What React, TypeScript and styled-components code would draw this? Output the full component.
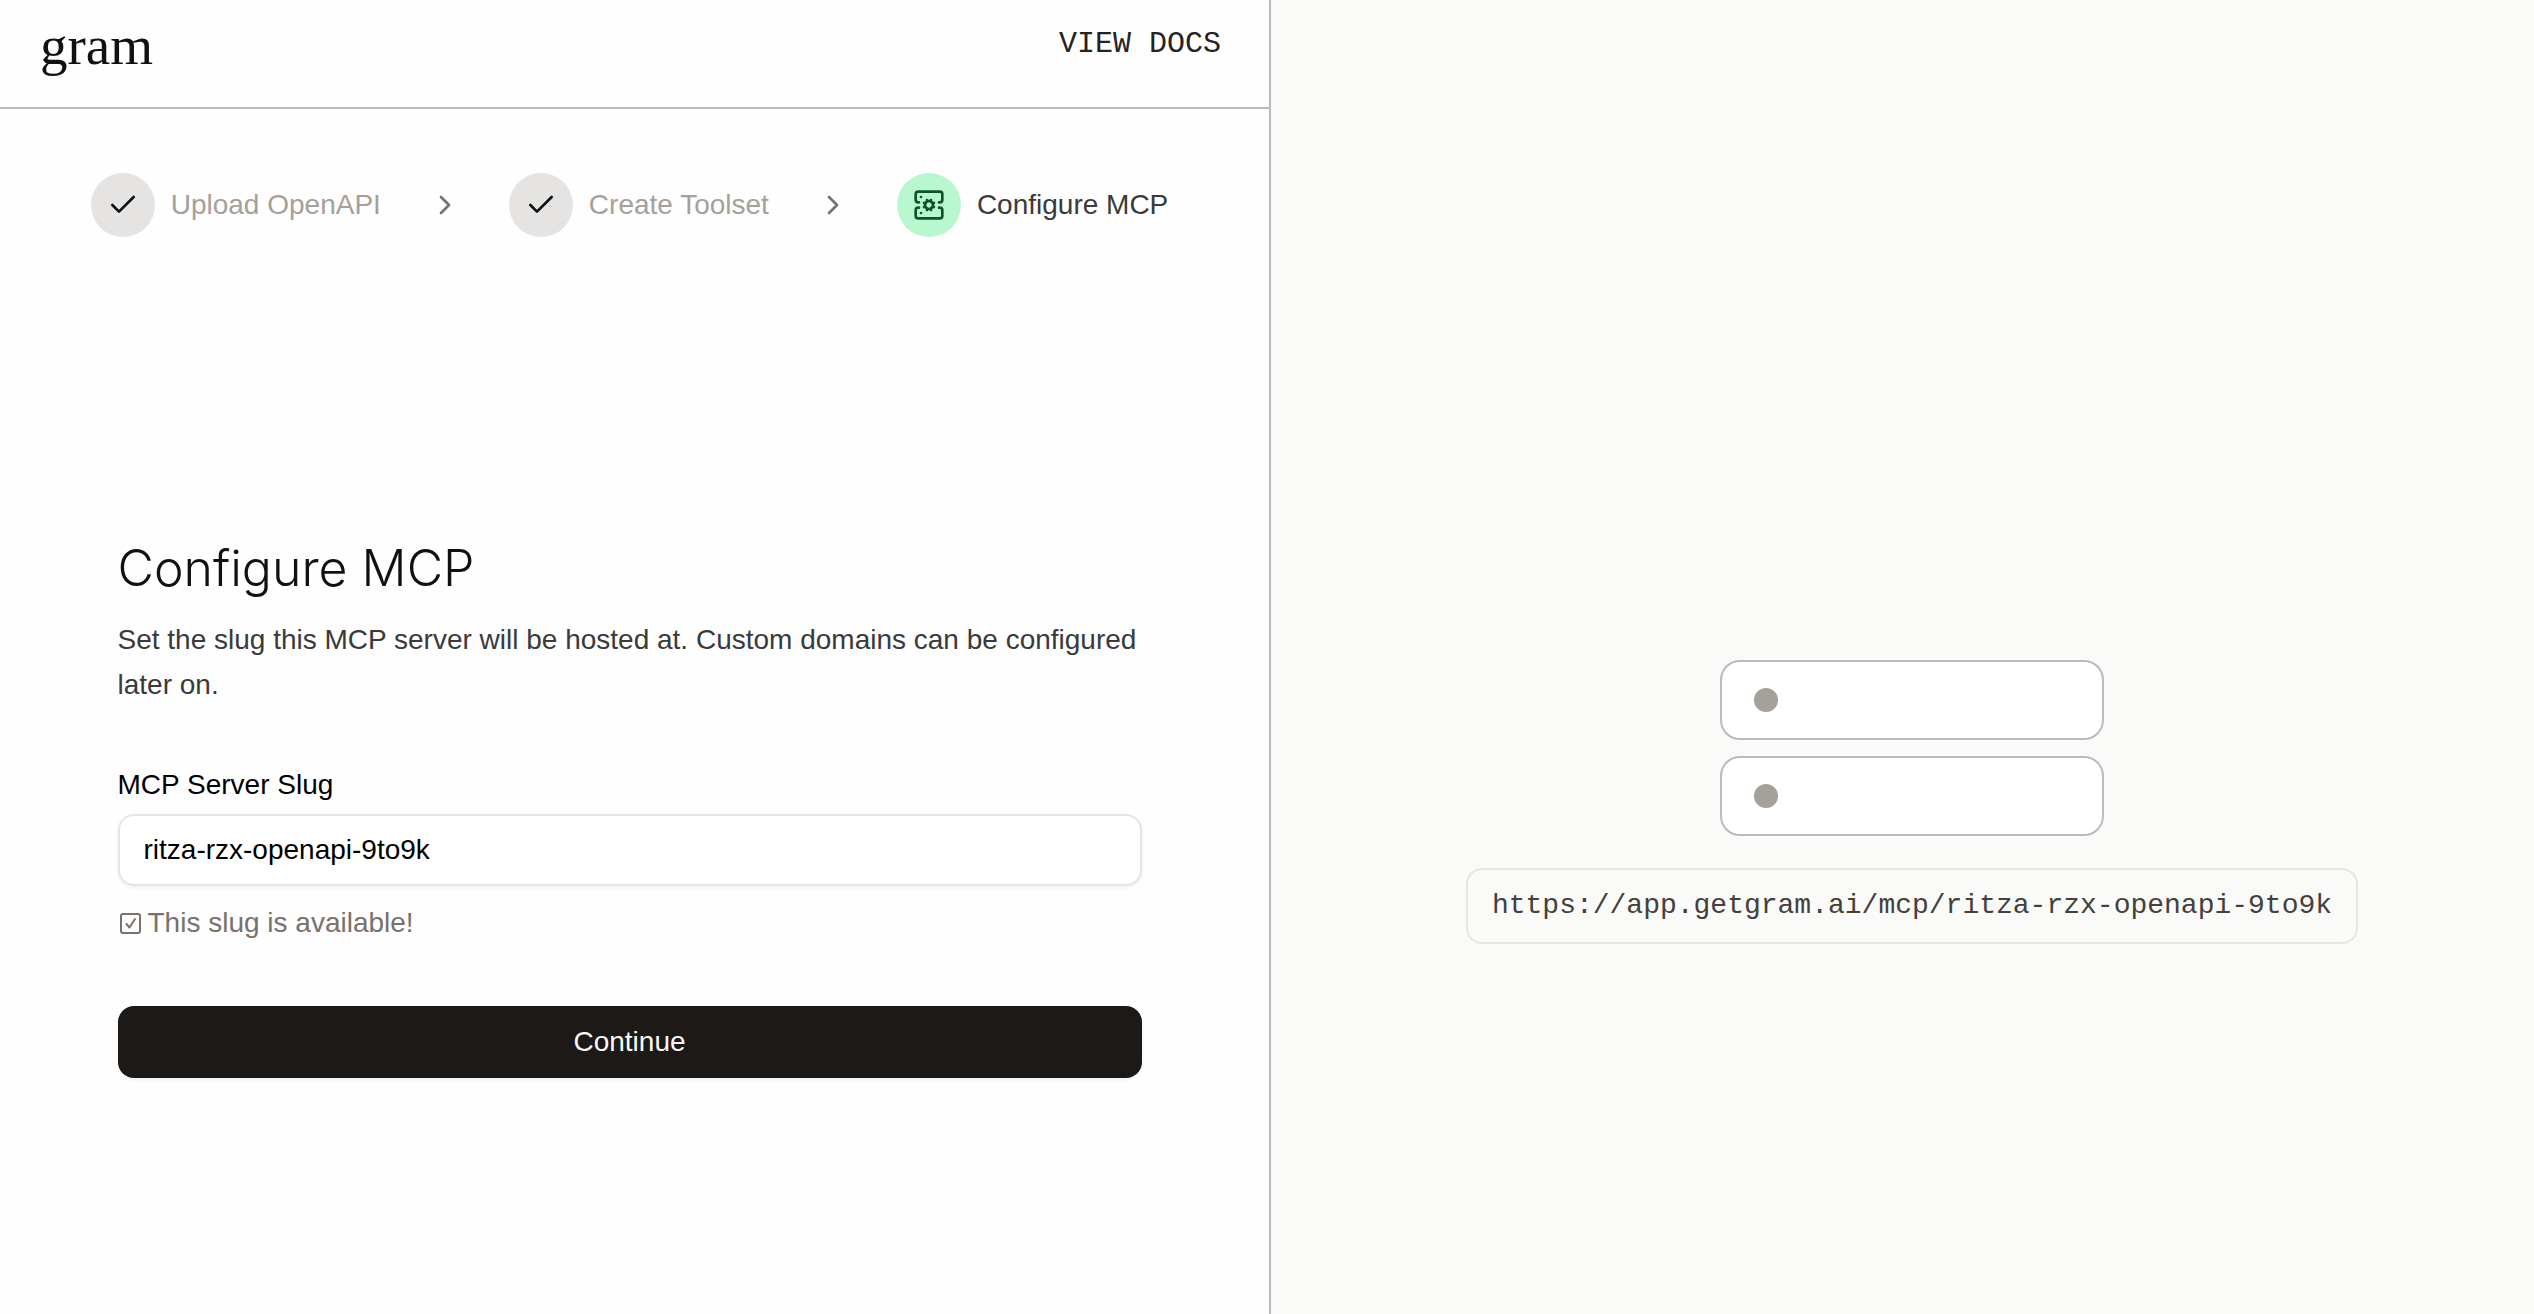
import React, { useState } from "react";
import styled, { createGlobalStyle } from "styled-components";
import { Check, ChevronRight, ServerCog } from "lucide-react";

const sans = `"Liberation Sans", Arial, sans-serif`;
const display = `Inter, "Liberation Sans", sans-serif`;
const mono = `"Liberation Mono", monospace`;

const GlobalStyle = createGlobalStyle`
  *, *::before, *::after { box-sizing: border-box; }
  body { margin: 0; background: #fefefe; font-family: ${sans}; font-size: 28px; color: #111; }
  h1, p, ol { margin: 0; padding: 0; }
`;

const Page = styled.div`
  display: grid;
  grid-template-columns: 1271fr 1263fr;
  min-height: 100vh;
`;

const Wizard = styled.div`
  display: flex;
  flex-direction: column;
  border-right: 2px solid #bbb;
`;

const Header = styled.header`
  display: flex;
  justify-content: space-between;
  align-items: flex-start;
  padding: 14px 48px 29px 40px;
  border-bottom: 2px solid #bbb;
`;

const Logo = styled.span`
  font-family: "Liberation Serif", serif;
  font-size: 55px;
  line-height: 64px;
  color: #111;
`;

const DocsLink = styled.a`
  font-family: ${mono};
  font-size: 30px;
  line-height: 60px;
  color: #262222;
  text-decoration: none;
`;

const Steps = styled.ol`
  display: flex;
  justify-content: center;
  align-items: center;
  gap: 48px;
  padding: 64px 10px 0 0;
  list-style: none;
`;

const StepItem = styled.li<{ $active?: boolean }>`
  display: flex;
  align-items: center;
  gap: 16px;
  line-height: 40px;
  white-space: nowrap;
  color: ${(p) => (p.$active ? "#3a3a3a" : "#a6a09b")};
`;

const StepBadge = styled.span<{ $active?: boolean }>`
  display: grid;
  place-items: center;
  width: 64px;
  height: 64px;
  border-radius: 50%;
  background: ${(p) => (p.$active ? "#b9f8cf" : "#e5e4e2")};
  color: ${(p) => (p.$active ? "#0d542b" : "#111")};
`;

const Separator = styled.li`
  display: flex;
  color: #79716b;
`;

const FormArea = styled.main`
  display: flex;
  flex: 1;
  justify-content: center;
  padding: 295px 64px 64px 54px;
`;

const Form = styled.form`
  display: flex;
  flex-direction: column;
  width: 100%;
  max-width: 1024px;
`;

const Title = styled.h1`
  font-family: ${display};
  font-size: 50px;
  line-height: 72px;
  font-weight: 300;
`;

const Intro = styled.p`
  margin-top: 13px;
  line-height: 45px;
  color: #3a3a3a;
`;

const FieldLabel = styled.label`
  margin-top: 58px;
  line-height: 40px;
  color: #000;
`;

const SlugInput = styled.input`
  height: 72px;
  margin-top: 9px;
  padding: 0 24px;
  border: 2px solid #e5e5e5;
  border-radius: 16px;
  background: #fff;
  box-shadow: 0 2px 4px rgba(0, 0, 0, 0.05);
  font: inherit;
  color: #000;
`;

const Status = styled.p`
  display: flex;
  align-items: center;
  gap: 6px;
  margin-top: 17px;
  line-height: 40px;
  color: #79716b;
`;

const Continue = styled.button`
  height: 72px;
  margin-top: 63px;
  border: 0;
  border-radius: 16px;
  background: #1c1917;
  box-shadow: 0 2px 4px rgba(0, 0, 0, 0.05);
  font: inherit;
  color: #fafafa;
  cursor: pointer;
`;

const Preview = styled.aside`
  display: flex;
  flex-direction: column;
  align-items: center;
  justify-content: center;
  gap: 32px;
  padding: 290px 0 0 19px;
  background: #fafaf8;
`;

const Servers = styled.div`
  display: grid;
  gap: 16px;
`;

const Server = styled.div`
  display: flex;
  align-items: center;
  width: 384px;
  height: 80px;
  padding: 0 32px;
  border: 2px solid #bbb;
  border-radius: 20px;
  background: #fff;
`;

const Dot = styled.span`
  width: 24px;
  height: 24px;
  border-radius: 50%;
  background: #a6a09b;
`;

const Url = styled.code`
  padding: 16px 24px;
  border: 2px solid #e5e5e3;
  border-radius: 16px;
  font-family: ${mono};
  font-size: 28px;
  line-height: 40px;
  color: #44403b;
`;

function CheckedBox() {
  return (
    <svg width="24" height="24" viewBox="0 0 24 24" fill="none" stroke="currentColor" strokeWidth="2" strokeLinejoin="round" aria-hidden="true">
      <rect x="3" y="3" width="19" height="19" rx="2" />
      <path d="M8.500 13l3 3.500 5.500-8.500" strokeLinecap="round" />
    </svg>
  );
}

export default function App() {
  const [slug, setSlug] = useState("ritza-rzx-openapi-9to9k");
  return (
    <Page>
      <GlobalStyle />
      <Wizard>
        <Header>
          <Logo>gram</Logo>
          <DocsLink href="#docs">VIEW DOCS</DocsLink>
        </Header>
        <Steps>
          <StepItem>
            <StepBadge><Check size={32} /></StepBadge>
            Upload OpenAPI
          </StepItem>
          <Separator aria-hidden="true"><ChevronRight size={32} /></Separator>
          <StepItem>
            <StepBadge><Check size={32} /></StepBadge>
            Create Toolset
          </StepItem>
          <Separator aria-hidden="true"><ChevronRight size={32} /></Separator>
          <StepItem $active aria-current="step">
            <StepBadge $active><ServerCog size={32} /></StepBadge>
            Configure MCP
          </StepItem>
        </Steps>
        <FormArea>
          <Form onSubmit={(e) => e.preventDefault()}>
            <Title>Configure MCP</Title>
            <Intro>
              Set the slug this MCP server will be hosted at. Custom domains can be configured later on.
            </Intro>
            <FieldLabel htmlFor="slug">MCP Server Slug</FieldLabel>
            <SlugInput id="slug" type="text" spellCheck={false} value={slug} onChange={(e) => setSlug(e.target.value)} />
            <Status><CheckedBox />This slug is available!</Status>
            <Continue type="submit">Continue</Continue>
          </Form>
        </FormArea>
      </Wizard>
      <Preview>
        <Servers>
          <Server><Dot /></Server>
          <Server><Dot /></Server>
        </Servers>
        <Url>https://app.getgram.ai/mcp/{slug}</Url>
      </Preview>
    </Page>
  );
}
